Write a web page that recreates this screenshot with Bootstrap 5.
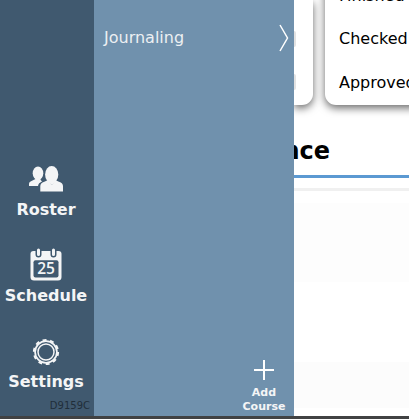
<!DOCTYPE html>
<html lang="en">
<head>
<meta charset="utf-8">
<meta name="viewport" content="width=device-width, initial-scale=1">
<title>Courses</title>
<link rel="stylesheet" href="https://cdn.jsdelivr.net/npm/bootstrap@5.3.0/dist/css/bootstrap.min.css">
<style>
body{font:16px/20px "DejaVu Sans",sans-serif;color:#000;height:419px}
svg{display:block}
.app{height:416px}
.side{width:94px;background:#40596f;padding-top:160px;padding-right:2px;color:#f4f5f6}
.side-link{height:86.4px;color:#f4f5f6;font-weight:700;white-space:nowrap}
.side-link svg{margin-bottom:1.500px}
.build{font-size:10px;line-height:12px;right:4px;bottom:4px;color:#202e3a}
.drawer{width:200px;background:#7091ad;color:#eceff2}
.course{padding:24px 4px 0 10px}
.course span{line-height:28px}
.add{width:60px;font-size:11px;line-height:14px;font-weight:700;color:#f4f5f6;padding-bottom:2px}
.add svg{margin-bottom:6px}
.content{width:115px}
.cards{height:105px;gap:12px}
.panel{box-shadow:0 3px 8px rgba(0,0,0,.6);background:#fff}
.panel-a{width:19px;border-radius:0 0 11px 0}
.panel-b{width:120px;border-radius:0 0 0 11px;padding-left:14px;margin-top:-14px}
.panel-b div{height:43.300px;white-space:nowrap}
.dots{padding-top:31px;gap:27px}
.dots i{width:2px;height:16px;background:#e2e2e2;border-radius:0 2px 2px 0}
.title{width:36px;height:70px;font-size:24px;line-height:30px;padding-top:31px;margin:0}
.rule{height:3px;background:#5b99d2}
.sheet{margin-top:10px;border-top:3px solid #f0f0f0}
.r1{height:12px}.r2{height:79px;background:#fdfdfd}.r3{height:80px}.r4{height:46px;background:#fcfcfc}
.foot{height:3px;background:#414243}
</style>
</head>
<body class="overflow-hidden">
<div class="app d-flex overflow-hidden">
  <nav class="side position-relative flex-shrink-0">
    <a class="side-link d-flex flex-column align-items-center text-decoration-none" href="#">
      <svg width="36" height="38" viewBox="0 0 36 38" fill="#f4f5f6"><ellipse cx="10" cy="13.300" rx="5.300" ry="6.700"/><path d="M7.500 17v2L3 21.300q-2 .8-2 2.500v2.200h9c.4-2.400 1.500-3.200 4-4.500l-1.500-1.700V17z"/><ellipse cx="23.700" cy="14.400" rx="7.500" ry="9.400" fill="#40596f"/><path d="M19.500 20.300c-1 .7-2 1-3.200 1.500-2.800 1-4 2-4 4.500v5.200h22.700v-5.200c0-2.500-1.200-3.500-4-4.500-1.200-.5-2.200-.8-3.200-1.500L23.700 25z" stroke="#40596f" stroke-width="1.600" paint-order="stroke"/><ellipse cx="23.700" cy="14.500" rx="6.600" ry="8.500"/><path d="M19.500 20h8.400l-.5 2-3.700 3-3.700-3z"/></svg>
      Roster</a>
    <a class="side-link d-flex flex-column align-items-center text-decoration-none" href="#">
      <svg width="36" height="38" viewBox="0 0 36 38"><path d="M5.500 5h25q3 0 3 3v23q0 3.500-3.500 3.500H6q-3.500 0-3.500-3.500V8q0-3 3-3z" fill="#f4f5f6"/><rect x="5.500" y="14.200" width="25" height="17.300" rx="2" fill="#40596f"/><path d="M10.500 4v4.500M25.500 4v4.500" stroke="#40596f" stroke-width="6" stroke-linecap="round"/><path d="M10.500 4v4.500M25.500 4v4.500" stroke="#f4f5f6" stroke-width="3" stroke-linecap="round"/><text x="18" y="28.400" text-anchor="middle" font-family="Open Sans,sans-serif" font-weight="600" font-size="15.500" fill="#f4f5f6">25</text></svg>
      Schedule</a>
    <a class="side-link d-flex flex-column align-items-center text-decoration-none" href="#">
      <svg width="36" height="38" viewBox="0 0 36 38" fill="none" stroke="#f4f5f6"><circle cx="18" cy="19" r="12" stroke-width="2.200" stroke-dasharray="3.900 3.640"/><circle cx="18" cy="19" r="10.900" stroke-width="1.700"/><circle cx="18" cy="19" r="8" stroke-width="1.500"/></svg>
      Settings</a>
    <span class="build position-absolute">D9159C</span>
  </nav>
  <aside class="drawer d-flex flex-column justify-content-between flex-shrink-0">
    <div class="course d-flex justify-content-between"><span>Journaling</span>
      <svg width="12" height="28" viewBox="0 0 12 28" fill="none" stroke="#fff" stroke-width="1.500"><path d="M2 1l7.500 13L2 27"/></svg></div>
    <div class="add align-self-end d-flex flex-column align-items-center text-center">
      <svg width="20" height="20" viewBox="0 0 20 20" stroke="#fff" stroke-width="2"><path d="M10 0v20M0 10h20"/></svg>
      <span>Add<br>Course</span></div>
  </aside>
  <main class="content overflow-hidden flex-shrink-0">
    <div class="cards d-flex">
      <section class="panel panel-a flex-shrink-0"><div class="dots d-flex flex-column"><i></i><i></i></div></section>
      <section class="panel panel-b flex-shrink-0"><div>Finished</div><div>Checked</div><div>Approved</div></section>
    </div>
    <h2 class="title d-flex justify-content-end overflow-hidden fw-bold">Performance</h2>
    <div class="rule"></div>
    <div class="sheet"><div class="r1"></div><div class="r2"></div><div class="r3"></div><div class="r4"></div></div>
  </main>
</div>
<footer class="foot"></footer>
<script src="https://cdn.jsdelivr.net/npm/bootstrap@5.3.0/dist/js/bootstrap.bundle.min.js"></script>
</body>
</html>
